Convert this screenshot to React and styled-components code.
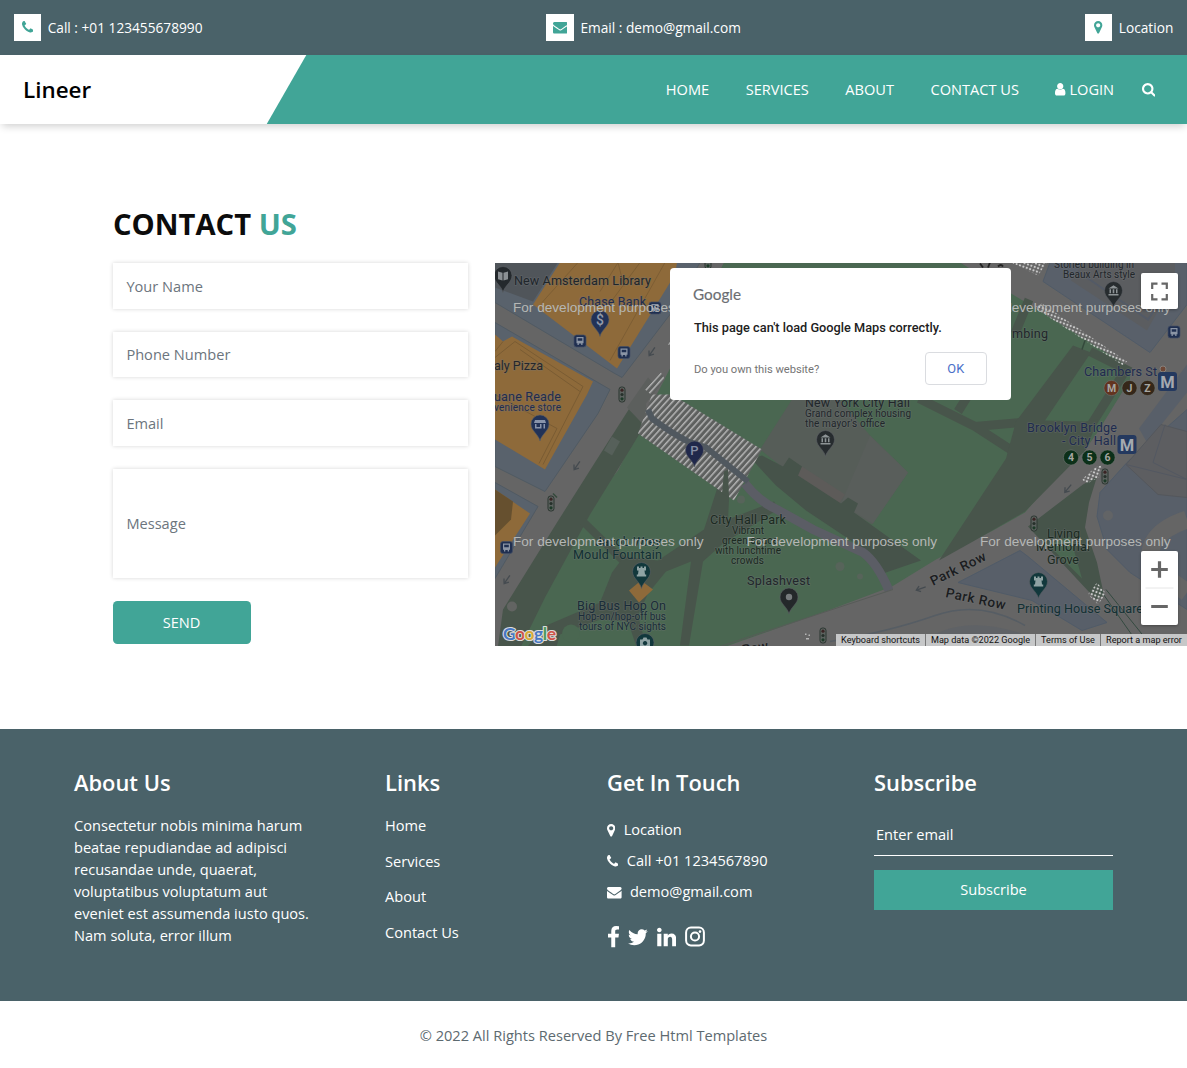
import React from "react";
import styled, { createGlobalStyle } from "styled-components";

const teal = "#41a597";
const slate = "#4a6269";

const GlobalStyle = createGlobalStyle`
  * { box-sizing: border-box; }
  body {
    margin: 0;
    background: #fff;
    color: #0c0c0c;
    font-family: "Open Sans", sans-serif;
    font-size: 14.6px;
    line-height: 21.9px;
    overflow-x: hidden;
  }
  h2, h5, p { margin: 0; }
`;

/* ---------- icons ---------- */

const shapes = {
  phone: [192, 1408, "M1600 1240q0 27-10 70.5t-21 68.5q-21 50-122 106-94 51-186 51-27 0-53-3.5t-57.5-12.5-47-14.5-55.5-20.5-49-18q-98-35-175-83-127-79-264-216t-216-264q-48-77-83-175-3-9-18-49t-20.5-55.5-14.5-47-12.5-57.5-3.5-53q0-92 51-186 56-101 106-122 25-11 68.5-21t70.5-10q14 0 21 3 18 6 53 76 11 19 30 54t35 63.5 31 53.5q3 4 17.5 25t21.5 35.5 7 28.5q0 20-28.5 50t-62 55-62 53-28.5 46q0 9 5 22.5t8.5 20.5 14 24 11.5 19q76 137 174 235t235 174q2 1 19 11.5t24 14 20.5 8.5 22.5 5q18 0 46-28.5t53-62 55-62 50-28.5q14 0 28.5 7t35.5 21.5 25 17.5q25 15 53.5 31t63.5 35 54 30q70 35 76 53 3 7 3 21z"],
  envelope: [0, 1792, "M1792 710v794q0 66-47 113t-113 47h-1472q-66 0-113-47t-47-113v-794q44 49 101 87 362 246 497 345 57 42 92.5 65.5t94.5 48 110 24.5h2q51 0 110-24.5t94.5-48 92.5-65.5q170-123 498-345 57-39 100-87zm0-294q0 79-49 151t-122 123q-376 261-468 325-10 7-42.5 31t-54 38.5-52 32.5-57.5 27-50 9h-2q-23 0-50-9t-57.5-27-52-32.5-54-38.5-42.5-31q-91-64-262-182.5t-205-142.5q-62-42-117-115.5t-55-136.5q0-78 41.5-130t118.5-52h1472q65 0 112.5 47t47.5 113z"],
  marker: [384, 1024, "M1152 640q0-106-75-181t-181-75-181 75-75 181 75 181 181 75 181-75 75-181zm256 0q0 109-33 179l-364 774q-16 33-47.5 52t-67.5 19-67.5-19-46.5-52l-365-774q-33-70-33-179 0-212 150-362t362-150 362 150 150 362z"],
  user: [256, 1280, "M1536 1399q0 109-62.5 187t-150.5 78h-854q-88 0-150.5-78t-62.5-187q0-85 8.5-160.5t31.5-152 58.5-131 94-89 134.5-34.5q131 128 313 128t313-128q76 0 134.5 34.5t94 89 58.5 131 31.5 152 8.5 160.5zm-256-887q0 159-112.5 271.5t-271.5 112.5-271.5-112.5-112.5-271.5 112.5-271.5 271.5-112.5 271.5 112.5 112.5 271.5z"],
  search: [64, 1664, "M1216 832q0-185-131.5-316.5t-316.5-131.5-316.5 131.5-131.5 316.5 131.5 316.5 316.5 131.5 316.5-131.5 131.5-316.5zm512 832q0 52-38 90t-90 38q-54 0-90-38l-343-342q-179 124-399 124-143 0-273.5-55.5t-225-150-150-225-55.5-273.5 55.5-273.5 150-225 225-150 273.5-55.5 273.5 55.5 225 150 150 225 55.5 273.5q0 220-124 399l343 343q37 37 37 90z"],
  facebook: [479, 864, "M1343 12v264h-157q-86 0-116 36t-30 108v189h293l-39 296h-254v759h-306v-759h-255v-296h255v-218q0-186 104-288.5t277-102.5q147 0 228 12z"],
  twitter: [108, 1576, "M1684 408q-67 98-162 167 1 14 1 42 0 130-38 259.5t-115.5 248.5-184.5 210.5-258 146-323 54.5q-271 0-496-145 35 4 78 4 225 0 401-138-105-2-188-64.5t-114-159.5q33 5 61 5 43 0 85-11-112-23-185.5-111.5t-73.5-205.5v-4q68 38 146 41-66-44-105-115t-39-154q0-88 44-163 121 149 294.5 238.5t371.5 99.5q-8-38-8-74 0-134 94.5-228.5t228.5-94.5q140 0 236 102 109-21 205-78-37 115-142 178 93-10 186-50z"],
  linkedin: [128, 1536, "M477 625v991h-330v-991h330zm21-306q1 73-50.5 122t-135.5 49h-2q-82 0-132-49t-50-122q0-74 51.5-122.5t134.5-48.5 133 48.5 51 122.5zm1166 729v568h-329v-530q0-105-40.5-164.5t-126.5-59.5q-63 0-105.5 34.5t-63.5 85.5q-11 30-11 81v553h-329q2-399 2-647t-1-296l-1-48h329v144h-2q20-32 41-56t56.5-52 87-43.5 114.5-15.5q171 0 275 113.5t104 332.5z"],
};

const Glyph = styled.svg`
  display: block;
  flex: none;
  fill: currentColor;
`;

const Icon = ({ name, size = 14.6 }) => {
  const [x, w, d] = shapes[name];
  return (
    <Glyph width={(w / 1792) * size} height={size} viewBox={`${x} 0 ${w} 1792`}>
      <path d={d} />
    </Glyph>
  );
};

const InstagramIcon = () => (
  <Glyph width="20" height="22" viewBox="0 0 20 22">
    <rect x="1.1" y="1.6" width="17.8" height="17.8" rx="4.8" fill="none" stroke="currentColor" strokeWidth="2" />
    <circle cx="10" cy="10.5" r="4.1" fill="none" stroke="currentColor" strokeWidth="2" />
    <circle cx="15" cy="5.6" r="1.3" />
  </Glyph>
);

/* ---------- header ---------- */

const TopBar = styled.div`
  display: flex;
  justify-content: space-between;
  align-items: center;
  height: 54.6px;
  padding: 0 13.7px;
  background: ${slate};
  color: #fff;
`;
const TopLink = styled.a`
  display: flex;
  align-items: center;
  gap: 6.6px;
  font-size: 13.7px;
`;
const TopLabel = styled.span`
  padding-top: 1px;
`;
const IconBox = styled.span`
  display: flex;
  align-items: center;
  justify-content: center;
  width: 27.4px;
  height: 27.4px;
  background: #fff;
  color: ${teal};
`;
const NavBar = styled.nav`
  display: flex;
  justify-content: space-between;
  align-items: stretch;
  height: 69.4px;
  background: ${teal};
  box-shadow: 0 4px 8px -2px rgba(0, 0, 0, 0.2);
`;
const Brand = styled.a`
  display: flex;
  align-items: center;
  width: 306.6px;
  padding: 1.6px 0 0 23px;
  background: #fff;
  color: #000;
  font-size: 22.4px;
  font-weight: 600;
  clip-path: polygon(0 0, 100% 0, 87% 100%, 0 100%);
`;
const NavList = styled.div`
  display: flex;
  align-items: center;
  padding: 1px 31.6px 0 0;
  color: #fff;
`;
const NavItem = styled.a`
  display: flex;
  align-items: center;
  gap: 3.5px;
  margin-right: ${(p) => p.$gap || 36.5}px;
`;

/* ---------- contact ---------- */

const Contact = styled.section`
  padding: 83px 0 82.7px;
`;
const Title = styled.h2`
  margin-left: 113px;
  font-size: 29.2px;
  line-height: 35px;
  font-weight: 700;
  span { color: ${teal}; }
`;
const ContactRow = styled.div`
  display: flex;
  gap: 27px;
  padding: 21.5px 0 0 113px;
`;
const Form = styled.form`
  width: 355px;
`;
const Field = styled.input`
  display: block;
  width: 100%;
  height: ${(p) => (p.$tall ? 109.5 : 45.6)}px;
  margin: 0 0 22.8px;
  padding: 0 13.4px ${(p) => (p.$tall ? 0 : 0.6)}px;
  border: none;
  background: #fff;
  box-shadow: 0 0 4px rgba(0, 0, 0, 0.17);
  font: inherit;
  &::placeholder { color: #6c757d; opacity: 1; }
`;
const SendButton = styled.button`
  display: block;
  width: 138px;
  height: 43.5px;
  padding: 0 1px 0 0;
  border: none;
  border-radius: 4.5px;
  background: ${teal};
  color: #fff;
  font: inherit;
`;

/* ---------- map ---------- */

const MapFrame = styled.div`
  position: relative;
  flex: 1;
  height: 383px;
  overflow: hidden;
  background: #666;
  font-family: Roboto, sans-serif;
`;
const MapDrawing = styled.svg`
  display: block;
  width: 692px;
  height: 383px;
`;
const Dialog = styled.div`
  position: absolute;
  left: 175px;
  top: 5px;
  width: 341px;
  height: 132px;
  padding: 15px 24px;
  border-radius: 4px;
  background: #fff;
  color: #212121;
`;
const DialogLogo = styled.div`
  margin-left: -1px;
  color: #6b6e72;
  font-family: Lato, sans-serif;
  font-size: 15.3px;
  line-height: 22px;
  -webkit-text-stroke: 0.15px #6b6e72;
`;
const DialogText = styled.p`
  margin-top: 13.5px;
  font-size: 12.75px;
  line-height: 18px;
  font-weight: 500;
`;
const DialogRow = styled.div`
  display: flex;
  align-items: center;
  justify-content: space-between;
  margin-top: 15.5px;
  color: #757575;
  font-size: 11.2px;
  span { padding-top: 1px; letter-spacing: -0.03px; }
`;
const OkButton = styled.button`
  width: 62.5px;
  height: 33px;
  border: 1px solid #dadce0;
  border-radius: 4px;
  background: #fff;
  color: #4a70c8;
  font: 400 12.8px Roboto, sans-serif;
`;
const ControlBox = styled.div`
  position: absolute;
  right: 9px;
  top: ${(p) => p.$top}px;
  width: 37px;
  height: ${(p) => p.$height}px;
  border-radius: 2px;
  background: #fff;
  box-shadow: 0 1px 3px rgba(0, 0, 0, 0.3);
`;
const Legal = styled.div`
  position: absolute;
  right: 0;
  bottom: 0;
  display: flex;
  height: 12.8px;
  background: #c6c7c8;
  color: #111;
  font-size: 9.1px;
  line-height: 13px;
  white-space: nowrap;
`;
const LegalItem = styled.span`
  width: ${(p) => p.$width}px;
  text-align: center;
  border-left: ${(p) => (p.$first ? "none" : "1px solid #777")};
`;

const Pin = ({ x, y, color, children }) => (
  <g transform={`translate(${x} ${y})`}>
    <path d="M0 17C-1.500 10-9 7-9 0a9 9 0 0 1 18 0c0 7-7.500 10-9 17z" fill={color} stroke="#5c6064" strokeWidth=".6" />
    {children}
  </g>
);
const Museum = () => (
  <path d="M-5-2L0-5.200 5-2zM-5 3.500H5V5H-5zM-4-1.200h1.500v4H-4zM-.8-1.200H.8v4H-.8zM2.500-1.200H4v4H2.500z" fill="#8d9396" />
);
const Rook = () => (
  <path d="M-4.500-5h2v1.500h1.500V-5h2v1.500h1.500V-5h2v4h-1.500L3.500 3h1.200v2h-9.400V3h1.200L-3-1h-1.500z" fill="#8fa3a4" />
);
const Bus = ({ x, y }) => (
  <g transform={`translate(${x} ${y})`}>
    <rect x="-6" y="-6" width="12" height="12" rx="2.5" fill="#1f2f50" stroke="#434f66" strokeWidth=".7" />
    <path d="M-3.500-4h7v6.200h-1V4h-1.300V2.500h-2.400V4h-1.300V2.200h-1zM-2.300-2.700v2.400h4.600v-2.400z" fill="#8b95a5" fillRule="evenodd" />
  </g>
);
const Signal = ({ x, y }) => (
  <g transform={`translate(${x} ${y})`}>
    <rect x="-3" y="-7.5" width="6" height="15" rx="2.5" fill="#5c625f" stroke="#2b3630" strokeWidth="1" />
    <circle cy="-4.3" r="1.6" fill="#3a2424" />
    <circle r="1.6" fill="#26302a" />
    <circle cy="4.3" r="1.6" fill="#1d3a28" />
  </g>
);
const Metro = ({ x, y }) => (
  <g transform={`translate(${x} ${y})`}>
    <rect x="-9.5" y="-9.5" width="19" height="19" rx="3" fill="#24395f" />
    <text y="6" textAnchor="middle" fontSize="16.5" fontWeight="700" fill="#a5a9af">M</text>
  </g>
);
const Line = ({ x, y, color, label }) => (
  <g transform={`translate(${x} ${y})`}>
    <circle r="7.6" fill={color} stroke="#6d7370" strokeWidth=".6" />
    <text y="3.8" textAnchor="middle" fontSize="10.5" fontWeight="700" fill="#a7a7a2">{label}</text>
  </g>
);
const Arrow = ({ x, y, angle = 0 }) => (
  <path d="M0-5V4M-3 1l3 4 3-4" transform={`translate(${x} ${y}) rotate(${angle})`} fill="none" stroke="#454b50" strokeWidth="1.3" />
);

const labels = [
  ["New Amsterdam Library", 514, 285, 137, 12.6, "#20262b"],
  ["Chase Bank", 579, 306.5, 67, 12.4, "#1f2c4f"],
  ["aly Pizza", 494, 370.5, 49, 12.6, "#25272b"],
  ["uane Reade", 494, 401.5, 67, 12.6, "#1f2c4f"],
  ["venience store", 494, 411.5, 67, 10, "#1f2c4f"],
  ["New York City Hall", 805, 407, 105, 12.4, "#22272b"],
  ["Grand complex housing", 805, 417, 106, 10, "#22272b"],
  ["the mayor's office", 805, 427, 80, 10, "#22272b"],
  ["City Hall Park", 710, 524, 76, 12.6, "#1b2a21"],
  ["Vibrant", 732, 534.5, 32, 10, "#1b2a21"],
  ["green space", 722, 544.5, 56, 10, "#1b2a21"],
  ["with lunchtime", 715, 554.5, 66, 10, "#1b2a21"],
  ["crowds", 731, 564.5, 33, 10, "#1b2a21"],
  ["Splashvest", 747, 585, 63, 12.6, "#22272b"],
  ["Jacob Wrey", 595, 546, 66, 12.4, "#123033"],
  ["Mould Fountain", 573, 559.5, 89, 12.6, "#123033"],
  ["Big Bus Hop On", 577, 610.5, 89, 12.6, "#1a2c38"],
  ["Hop-on/hop-off bus", 578, 620.5, 88, 10, "#1a2c38"],
  ["tours of NYC sights", 579, 630.5, 87, 10, "#1a2c38"],
  ["Storied building in", 1054, 268, 80, 10, "#22272b"],
  ["Beaux Arts style", 1063, 278, 72, 10, "#22272b"],
  ["mbing", 1012, 338, 36, 12.6, "#22272b"],
  ["Chambers St", 1084, 376, 73, 12.6, "#1f2c4f"],
  ["Brooklyn Bridge", 1027, 432.5, 90, 12.6, "#1f2c4f"],
  ["- City Hall", 1062, 445.5, 54, 12.6, "#1f2c4f"],
  ["Living", 1047, 538.5, 33, 12.6, "#1b2a21"],
  ["Memorial", 1036, 551.5, 54, 12.6, "#1b2a21"],
  ["Grove", 1047, 564.5, 32, 12.6, "#1b2a21"],
  ["Printing House Square", 1017, 613.5, 126, 12.6, "#123033"],
];

const watermarks = [[513, 312], [746.5, 312], [980, 312], [513, 545.5], [746.5, 545.5], [980, 545.5]];

const CityMap = () => (
  <MapDrawing viewBox="495 263.500 692 383">
    <defs>
      <pattern id="hatch" width="4.6" height="4.6" patternUnits="userSpaceOnUse" patternTransform="rotate(42)">
        <rect width="4.6" height="4.6" fill="#5e605f" />
        <rect width="1.5" height="4.6" fill="#b4b4b4" />
      </pattern>
      <pattern id="dots" width="3.6" height="3.6" patternUnits="userSpaceOnUse" patternTransform="rotate(20)">
        <circle cx="1.8" cy="1.8" r="1.15" fill="#cacaca" />
      </pattern>
    </defs>
    <rect x="495" y="263" width="692" height="384" fill="#656565" />

    {/* blocks west of the park */}
    <path d="M495 263h205L670 315 622 378 613 373 495 303z" fill="#59626c" stroke="#505a63" />
    <path d="M495 263h63L533 302 495 288z" fill="#50555a" />
    <path d="M560 263h117l-2 12-58 94-84-64z" fill="#8e6a3a" />
    <path d="M578 263l-36 40M640 263l-28 38M665 263l-55 98M600 292l18-29 6 24" fill="none" stroke="#7d5e34" />
    <path d="M495 323l115 67-12 24-53 78-50-25z" fill="#59626c" stroke="#505a63" />
    <path d="M495 335l8 7 9-5 81 45-6 13-42 75-50-30z" fill="#8e6a3a" />
    <path d="M495 358l20-16 68 45-40 78M495 395l62 34-18 35M520 350l60 42M503 342l-8 10" fill="none" stroke="#7a5c33" />
    <path d="M495 483l43 24-43 72z" fill="#59626c" stroke="#505a63" />
    <path d="M495 490l35 24-35 54z" fill="#8e6a3a" />
    <path d="M495 490l18 12-2 18-16 16z" fill="#66502f" />

    {/* park */}
    <path d="M724 263h236l71 43 99 62v12l-32 52-14 20-36 34-23 27-32 18-57 29-44 27-64 24-159 56H498l5-36 54-87 61-73z" fill="#4a6751" />
    <path d="M600 455l30-47 18 12-18 30-40 65-45 83-24 49h-23l5-37 54-87z" fill="#48554b" />
    <path d="M612 437l8 5-8 14-8-5z" fill="#56605a" />
    <path d="M627 408l21-30 10 10-12 16 2 26z" fill="#5c5f5d" />
    <path d="M583 522l46 45" stroke="#48554b" strokeWidth="8" />
    <path d="M720 480l6-8 4 8-2 40 46-18 4 8-55 34-20 18-14 84h-9l11-84-25 10-18 22-10 22 8 30h-10l-8-24-28-2-40 15-4 14h-30l18-22 56-24 12-30 12-16 34 4 46-31z" fill="#48554b" />
    <circle cx="571" cy="634" r="9" fill="#4a6751" />
    <circle cx="512" cy="607" r="5" fill="#626462" />
    <circle cx="741" cy="500" r="4" fill="#57645a" />
    <circle cx="840" cy="567" r="4.5" fill="#57645a" />
    <circle cx="860" cy="577" r="3" fill="#57645a" />
    <path d="M760 450l32-50h48l30 36 38 37-36 52-78-48z" fill="#565d58" />
    <path d="M870 436l38 37-35 51-32-20z" fill="#595e5b" />
    <path d="M802 467l43 28-6 9-43-28z" fill="#5d5b59" />
    <path d="M762 456l21 11 6-9 13 9-4 9 43 28 7-6 10 6-4 9 67 48-38 13-17-23-60-40-30-25-25-27z" fill="#46534a" />
    <path d="M919 399l56 28 40 26M975 427l46-4M968 396l-10 16M1090 352l36 18-34 54M1029 300l-14 34" fill="none" stroke="#48554b" strokeWidth="9" />
    <path d="M1073 346l18 7-46 68 40 1 13-2-12 30-61 62-52 30-34 19 67-102 10-37z" fill="#48554b" />
    <path d="M745 484q14 18 32 26l36 20 50 23q14 10 26 38" fill="none" stroke="#5b5d65" strokeWidth="9" />

    {/* plaza */}
    <path d="M652 395h20l90 55-28 51-96-67z" fill="url(#hatch)" />
    <path d="M648 410l4 9q20 15 36 23l18 6 42 34" fill="none" stroke="#50585f" strokeWidth="6" />
    <path d="M724 472l4-2 1 28-7-4z" fill="#48554b" />
    <path d="M645 390l16-17 4 7-13 16zM668 345l6-9v12z" fill="url(#hatch)" />
    <path d="M553 494l4 4M1086 338l-4 12" stroke="#344a3c" strokeWidth="1.5" />

    {/* streets and blocks east of the park */}
    <path d="M1050 263h137v42l-37 48-107-71z" fill="#59606a" stroke="#505b68" />
    <path d="M1083 263h92v18l-28 50-76-50z" fill="#5b5d60" />
    <path d="M1078 272l70 48 27-40" fill="none" stroke="#535a66" strokeWidth="2" />
    <path d="M1187 410v200l-57-37-23-23-10-33 3-24 27-30z" fill="#585f69" stroke="#505b68" />
    <path d="M1187 365l-48 64 8 14 40-50z" fill="#585f69" />
    <path d="M1187 432l-26-7-35 40 32 30 29 3z" fill="#5d5e61" stroke="#54575c" />
    <path d="M1165 425l-12 38 34 17M1126 465l61 15" stroke="#535861" fill="none" />
    <path d="M1187 520q-45 15-35 48l35 25" fill="none" stroke="#656565" strokeWidth="18" />
    <circle cx="1108" cy="516" r="5" fill="#626466" />
    <path d="M1097 477l-14 8-55 42 68 73 8-4-7-33-12-35 4-25z" fill="#46544a" />
    <path d="M1048 545l34 34-12-42z" fill="#4a6751" />
    <path d="M958 583l62-32 8 6 79 66-25 8-50-30z" fill="#585f69" stroke="#505b68" />
    <path d="M915 647q40-33 100-15l50 15z" fill="#5f6266" />
    <path d="M830 642q60-10 105-26t90 10" fill="none" stroke="#565d64" strokeWidth="1.5" />
    <path d="M1100 590l40 57M1106 590l46 57" stroke="#344a40" />
    <path d="M893 590l-173 57" stroke="#575c58" />
    <path d="M1034 308l8-4 85 58-4 4z" fill="url(#dots)" />
    <path d="M1011 263h36l-9 13zM1095 468l8-3-4 13-12 6-5-4zM1097 583l9 11-8 11-10-10z" fill="url(#dots)" />
    <path d="M980 264l3 4M990 263l-2 5M998 267q3-3 5 0" stroke="#222" strokeWidth="1.8" fill="none" />
    <path d="M629 591l12-10 12 9-14 13z" fill="#8e6a3a" />

    <Signal x={622} y={395} /><Signal x={551} y={504} /><Signal x={1034} y={524} />
    <Signal x={1105} y={477} /><Signal x={823} y={636} /><Signal x={708} y={262} />
    <Arrow x={652} y={352} angle={35} /><Arrow x={577} y={466} angle={35} />
    <Arrow x={507} y={580} angle={35} /><Arrow x={1068} y={489} angle={40} /><Arrow x={921} y={589} angle={70} />
    <Bus x={655} y={308.5} /><Bus x={580} y={341.5} /><Bus x={624} y={353} /><Bus x={506.5} y={548} /><Bus x={1174} y={332.5} />

    <g style={{ paintOrder: "stroke" }} stroke="#74777a" strokeOpacity=".35" strokeWidth="1.6" strokeLinejoin="round">
      {labels.map(([text, x, y, width, size, fill]) => (
        <text key={text} x={x} y={y} fontSize={size} fill={fill} textLength={width}>{text}</text>
      ))}
      <g fill="#1b1d1f" fontSize="13.5" fontWeight="500">
        <text transform="translate(933 586.500) rotate(-26)" textLength="60">Park Row</text>
        <text transform="translate(945 597.500) rotate(12)" textLength="61">Park Row</text>
        <text transform="translate(743 655) rotate(-10)">Row</text>
      </g>
    </g>

    <Pin x={503} y={276} color="#24292d">
      <path d="M-5-4l4.500 1.200V5L-5 3.800zM5-4L.5-2.800V5L5 3.800z" fill="#8b9094" />
    </Pin>
    <Pin x={600} y={320} color="#223257">
      <text y="5" textAnchor="middle" fontSize="14" fontWeight="500" fill="#929aa9">$</text>
    </Pin>
    <Pin x={540} y={424.5} color="#223257">
      <path d="M-5-4H5l1 3H-6zM-5 0h1.500v3H0V0h1.500v4.500H-5zM3.500 0H5v4.500H3.500z" fill="#8994ab" />
    </Pin>
    <Pin x={694.5} y={450.5} color="#20284b">
      <text y="5" textAnchor="middle" fontSize="13" fontWeight="500" fill="#858da3">P</text>
    </Pin>
    <Pin x={825.5} y={440} color="#272c2f"><Museum /></Pin>
    <Pin x={1113.5} y={291} color="#272c2f"><Museum /></Pin>
    <Pin x={641.5} y={572} color="#12383c"><Rook /></Pin>
    <Pin x={1038.5} y={582} color="#12383c"><Rook /></Pin>
    <Pin x={789} y={597.5} color="#24282a"><circle r="3.2" fill="#777b7d" /></Pin>
    <Pin x={645} y={643} color="#12383c">
      <path d="M-5-3h2.500l1-2h3l1 2H5v7H-5zM0-1.500a2.200 2.200 0 1 0 .1 0z" fill="#8fa3a4" fillRule="evenodd" />
    </Pin>
    <path d="M805 634h1.500v1.500H805zM808.500 635h1.500v1.500h-1.500zM806 638.500h3v1.500h-3z" fill="#b5b5b5" />

    <circle cx="1163" cy="369.5" r="3" fill="#6e4736" stroke="#85817d" />
    <Metro x={1167.5} y={382} /><Metro x={1127} y={445} />
    <Line x={1111.5} y={388.5} color="#633420" label="M" />
    <Line x={1129.5} y={388.5} color="#352719" label="J" />
    <Line x={1147.5} y={388.5} color="#352719" label="Z" />
    <Line x={1071} y={458} color="#0c3019" label="4" />
    <Line x={1089.5} y={458} color="#0c3019" label="5" />
    <Line x={1107.5} y={458} color="#0c3019" label="6" />

    <g fill="#b5b7b5" fontFamily="Liberation Sans, sans-serif" fontSize="13.6">
      {watermarks.map(([x, y]) => (
        <text key={`${x}-${y}`} x={x} y={y + 0.5} textLength="190.5">For development purposes only</text>
      ))}
    </g>

    <text x="503" y="640" fontFamily="Lato, sans-serif" fontSize="17.5" fontWeight="700" textLength="53" stroke="#dcdcdc" strokeWidth="2.2" strokeLinejoin="round" style={{ paintOrder: "stroke" }}>
      <tspan fill="#4777c4">G</tspan><tspan fill="#cf5348">o</tspan><tspan fill="#d9ab36">o</tspan>
      <tspan fill="#4777c4">g</tspan><tspan fill="#489a5a">l</tspan><tspan fill="#cf5348">e</tspan>
    </text>
  </MapDrawing>
);

const MapPanel = () => (
  <MapFrame>
    <CityMap />
    <Dialog>
      <DialogLogo>Google</DialogLogo>
      <DialogText>This page can't load Google Maps correctly.</DialogText>
      <DialogRow>
        <span>Do you own this website?</span>
        <OkButton>OK</OkButton>
      </DialogRow>
    </Dialog>
    <ControlBox $top={9.5} $height={36.5}>
      <Glyph width="37" height="37" viewBox="0 0 37 37">
        <path d="M11.200 16v-5.300h5.300M20.500 10.700h5.300V16M25.800 21v5.300h-5.300M16.500 26.300h-5.300V21" fill="none" stroke="#666" strokeWidth="2.2" />
      </Glyph>
    </ControlBox>
    <ControlBox $top={287.5} $height={74}>
      <Glyph width="37" height="74" viewBox="0 0 37 74">
        <path d="M10.200 18.500h16.600M18.500 10.200v16.600M10.200 55.500h16.600" stroke="#666" strokeWidth="3.2" />
        <path d="M4.500 37h28" stroke="#e6e6e6" />
      </Glyph>
    </ControlBox>
    <Legal>
      <LegalItem $width={89} $first>Keyboard shortcuts</LegalItem>
      <LegalItem $width={110}>Map data ©2022 Google</LegalItem>
      <LegalItem $width={65}>Terms of Use</LegalItem>
      <LegalItem $width={87}>Report a map error</LegalItem>
    </Legal>
  </MapFrame>
);

/* ---------- footer ---------- */

const Footer = styled.footer`
  display: grid;
  grid-template-columns: 311px 222px 267px 239px;
  align-items: start;
  height: 272.2px;
  padding: 41px 0 0 74px;
  background: ${slate};
  color: #fff;
`;
const FooterTitle = styled.h5`
  margin-bottom: 18.6px;
  font-size: 21.9px;
  line-height: 26.3px;
  font-weight: 600;
`;
const About = styled.p`
  width: 240px;
`;
const Links = styled.div`
  display: grid;
  gap: 13.7px;
`;
const ContactList = styled.div`
  display: grid;
  gap: 9.1px;
  padding-top: 3.9px;
`;
const ContactLine = styled.a`
  display: flex;
  align-items: center;
  gap: 8.3px;
`;
const Social = styled.div`
  display: flex;
  align-items: center;
  gap: 9px;
  margin: 22.8px 0 0 1.3px;
`;
const EmailInput = styled.input`
  display: block;
  width: 100%;
  height: 40.7px;
  padding: 0 2px 1px;
  border: none;
  border-bottom: 1px solid #fff;
  background: transparent;
  font: inherit;
  &::placeholder { color: #fff; opacity: 1; }
`;
const SubscribeButton = styled.button`
  display: block;
  width: 100%;
  height: 40px;
  margin-top: 14px;
  border: none;
  background: ${teal};
  color: #fff;
  font: inherit;
`;
const Copyright = styled.p`
  padding: 23.5px 0 22px;
  text-align: center;
  color: #5d6a70;
`;

export default function App() {
  return (
    <>
      <GlobalStyle />
      <TopBar>
        <TopLink><IconBox><Icon name="phone" /></IconBox><TopLabel>Call : +01 123455678990</TopLabel></TopLink>
        <TopLink><IconBox><Icon name="envelope" /></IconBox><TopLabel>Email : demo@gmail.com</TopLabel></TopLink>
        <TopLink><IconBox><Icon name="marker" /></IconBox><TopLabel>Location</TopLabel></TopLink>
      </TopBar>
      <NavBar>
        <Brand>Lineer</Brand>
        <NavList>
          <NavItem>HOME</NavItem>
          <NavItem>SERVICES</NavItem>
          <NavItem>ABOUT</NavItem>
          <NavItem>CONTACT US</NavItem>
          <NavItem $gap={27.8}><Icon name="user" />LOGIN</NavItem>
          <Icon name="search" />
        </NavList>
      </NavBar>
      <Contact>
        <Title>CONTACT <span>US</span></Title>
        <ContactRow>
          <Form>
            <Field placeholder="Your Name" />
            <Field placeholder="Phone Number" />
            <Field placeholder="Email" />
            <Field placeholder="Message" $tall />
            <SendButton type="button">SEND</SendButton>
          </Form>
          <MapPanel />
        </ContactRow>
      </Contact>
      <Footer>
        <div>
          <FooterTitle>About Us</FooterTitle>
          <About>
            Consectetur nobis minima harum beatae repudiandae ad adipisci recusandae unde, quaerat,
            voluptatibus voluptatum aut eveniet est assumenda iusto quos. Nam soluta, error illum
          </About>
        </div>
        <div>
          <FooterTitle>Links</FooterTitle>
          <Links><a>Home</a><a>Services</a><a>About</a><a>Contact Us</a></Links>
        </div>
        <div>
          <FooterTitle>Get In Touch</FooterTitle>
          <ContactList>
            <ContactLine><Icon name="marker" />Location</ContactLine>
            <ContactLine><Icon name="phone" />Call +01 1234567890</ContactLine>
            <ContactLine><Icon name="envelope" />demo@gmail.com</ContactLine>
          </ContactList>
          <Social>
            <Icon name="facebook" size={23} />
            <Icon name="twitter" size={22.5} />
            <Icon name="linkedin" size={22.5} />
            <InstagramIcon />
          </Social>
        </div>
        <div>
          <FooterTitle>Subscribe</FooterTitle>
          <EmailInput placeholder="Enter email" />
          <SubscribeButton>Subscribe</SubscribeButton>
        </div>
      </Footer>
      <Copyright>© 2022 All Rights Reserved By Free Html Templates</Copyright>
    </>
  );
}
